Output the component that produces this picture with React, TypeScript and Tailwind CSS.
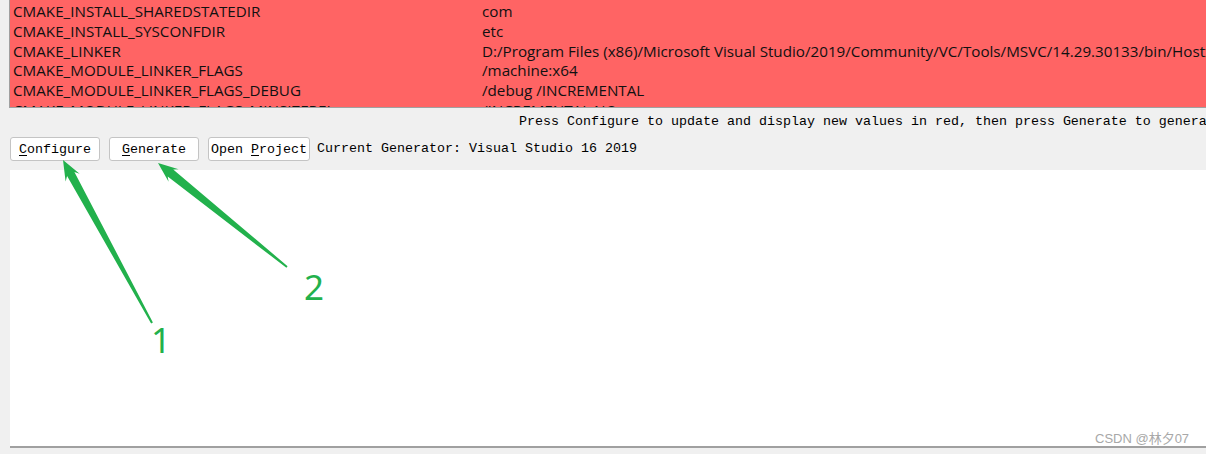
const rows = [
    ['CMAKE_INSTALL_SHAREDSTATEDIR', 'com'],
    ['CMAKE_INSTALL_SYSCONFDIR', 'etc'],
    ['CMAKE_LINKER', 'D:/Program Files (x86)/Microsoft Visual Studio/2019/Community/VC/Tools/MSVC/14.29.30133/bin/Hostx64/x64/link.exe'],
    ['CMAKE_MODULE_LINKER_FLAGS', '/machine:x64'],
    ['CMAKE_MODULE_LINKER_FLAGS_DEBUG', '/debug /INCREMENTAL'],
    ['CMAKE_MODULE_LINKER_FLAGS_MINSIZEREL', '/INCREMENTAL:NO'],
];

function QtButton({ label, mnemonic, wide }) {
    const i = label.indexOf(mnemonic);
    return (
        <button
            className={`h-[24px] bg-white border border-[#c4c4c4] rounded-[3px] text-[13.33px] text-black leading-[24px] text-center font-['Liberation_Mono','DejaVu_Sans_Mono',monospace] ${wide ? 'w-[90px]' : 'px-[2px]'}`}
        >
            {label.slice(0, i)}
            <span className="underline underline-offset-2">{mnemonic}</span>
            {label.slice(i + 1)}
        </button>
    );
}

export default function App() {
    return (
        <div className="relative w-[1206px] h-[454px] bg-[#f0f0f0] overflow-hidden">
            <div className="ml-[9px] h-[108px] border-l border-b border-[#a0a0a0] bg-[#ff6464] overflow-hidden pl-[3px] pt-[1px] text-[15.2px] text-[#111] font-['Open_Sans','Noto_Sans',sans-serif]">
                {rows.map(([k, v]) => (
                    <div key={k} className="grid grid-cols-[469px_1fr] h-[19.75px] leading-[20px] whitespace-nowrap">
                        <span>{k}</span>
                        <span>{v}</span>
                    </div>
                ))}
            </div>

            <div className="mt-[4px] h-[20px] leading-[20px] pl-[519px] whitespace-nowrap text-[13.33px] text-black font-['Liberation_Mono','DejaVu_Sans_Mono',monospace]">
                Press Configure to update and display new values in red, then press Generate to generate selected build files.
            </div>

            <div className="mt-[5px] h-[24px] pl-[10px] flex items-center gap-[9px]">
                <QtButton label="Configure" mnemonic="C" wide />
                <QtButton label="Generate" mnemonic="G" wide />
                <div className="flex items-center gap-[7px]">
                    <QtButton label="Open Project" mnemonic="P" />
                    <span className="text-[13.33px] text-black whitespace-nowrap font-['Liberation_Mono','DejaVu_Sans_Mono',monospace]">
                        Current Generator: Visual Studio 16 2019
                    </span>
                </div>
            </div>

            <div className="mt-[9px] ml-[10px] h-[278px] bg-white border-b-2 border-[#a0a0a0]" />

            {/* watermark */}
            <span className="absolute left-[1095px] top-[429px] text-[13px] text-[#a8a8a8] font-['Liberation_Sans','Noto_Sans_CJK_SC',sans-serif]">
                CSDN @林夕07
            </span>

            {/* annotation arrows */}
            <svg className="absolute inset-0 pointer-events-none" width="1206" height="454">
                <polygon
                    fill="#22b14c"
                    points="63,160 65.6,181.4 67.1,176 151.1,323.5 152.9,322.5 74.4,172 79.6,173.7"
                />
                <polygon
                    fill="#22b14c"
                    points="158,163 168.6,181.8 167.7,176.5 286.4,267.8 287.6,266.2 173.2,169.6 178.6,169.3"
                />
                <text x="151" y="353" fill="#22b14c" fontSize="35" className="font-['Noto_Sans',sans-serif]">1</text>
                <text x="304" y="300" fill="#22b14c" fontSize="35" className="font-['Noto_Sans',sans-serif]">2</text>
            </svg>
        </div>
    );
}
